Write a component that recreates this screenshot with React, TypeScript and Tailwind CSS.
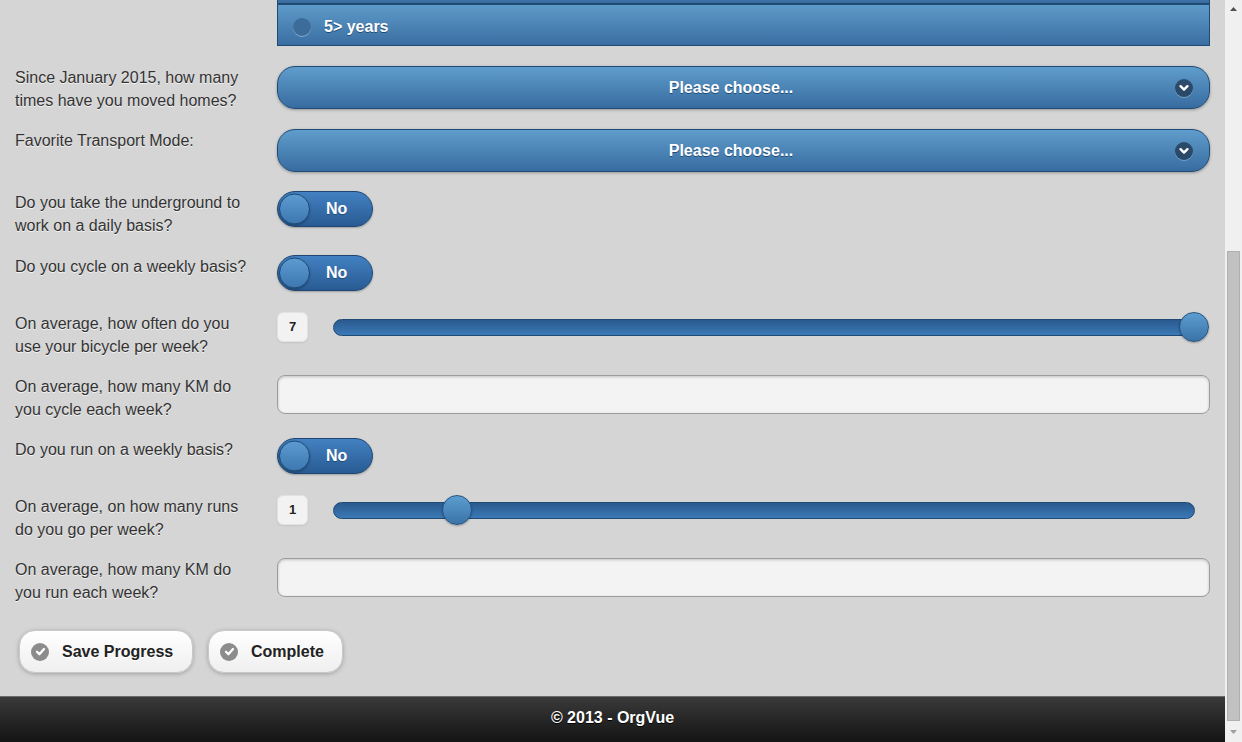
import React from "react";

const labelCls =
  "w-[262px] shrink-0 pr-3 text-[16px] leading-[23px] text-[#333] [text-shadow:0_1px_0_#f3f3f3]";

function Chevron() {
  return (
    <span className="absolute right-[16px] top-1/2 -translate-y-1/2 w-[18px] h-[18px] rounded-full bg-[#263f5c]/85 flex items-center justify-center shadow-[0_1px_0_rgba(255,255,255,0.3)]">
      <svg width="10" height="10" viewBox="0 0 10 10">
        <path d="M1.6 3.2 L5 6.6 L8.4 3.2" fill="none" stroke="#fff" strokeWidth="2.4" strokeLinecap="round" strokeLinejoin="round" />
      </svg>
    </span>
  );
}

function Select() {
  return (
    <div className="relative flex-1 h-[43px] rounded-[18px] border border-[#1d4a76] bg-gradient-to-b from-[#5f9dcc] to-[#386ca0] shadow-[0_1px_3px_rgba(0,0,0,0.3)] flex items-center justify-center pr-[25px]">
      <span className="text-white font-bold text-[16px] [text-shadow:0_1px_0_#1f4b75]">Please choose...</span>
      <Chevron />
    </div>
  );
}

function Toggle() {
  return (
    <div className="relative w-[96px] h-[36px] rounded-full border border-[#1e4670] bg-gradient-to-b from-[#4381c2] to-[#285b93] shadow-[0_1px_2px_rgba(0,0,0,0.25)] flex items-center">
      <span className="absolute left-[1px] top-1/2 -translate-y-1/2 w-[31px] h-[31px] rounded-full border border-[#1f4a74] bg-gradient-to-b from-[#5c9bd1] to-[#3d78b0] shadow-[0_1px_2px_rgba(0,0,0,0.3)]" />
      <span className="absolute left-[48px] text-white font-bold text-[16px] [text-shadow:0_1px_0_#1f4b75]">No</span>
    </div>
  );
}

function Slider({ value, max }: { value: number; max: number }) {
  const pct = (value / max) * 100;
  return (
    <div className="flex-1 flex items-center h-[30px]">
      <div className="w-[31px] h-[30px] shrink-0 rounded-[6px] bg-[#f2f2f2] border border-[#e2e2e2] shadow-[0_1px_2px_rgba(0,0,0,0.08)] flex items-center justify-center text-[13px] font-bold text-[#222]">
        {value}
      </div>
      <div className="ml-[25px] mr-[15px] flex-1 relative h-[17px] rounded-full border border-[#1f4a73] bg-gradient-to-b from-[#2a5a8e] to-[#3b79b6]">
        <span
          className="absolute top-1/2 -translate-x-1/2 -translate-y-1/2 w-[30px] h-[30px] rounded-full border border-[#245380] bg-gradient-to-b from-[#5d9dd0] to-[#3a73a8] shadow-[0_1px_2px_rgba(0,0,0,0.3)]"
          style={{ left: `${pct}%` }}
        />
      </div>
    </div>
  );
}

function Input() {
  return (
    <div className="flex-1 h-[39px] rounded-[8px] border border-[#9c9c9c] bg-[#f3f3f3] shadow-[inset_0_1px_3px_rgba(0,0,0,0.2)]" />
  );
}

function Check() {
  return (
    <span className="w-[18px] h-[18px] rounded-full bg-[#8c8c8c] flex items-center justify-center">
      <svg width="11" height="11" viewBox="0 0 11 11">
        <path d="M2 5.8 L4.4 8.2 L9 3" fill="none" stroke="#fff" strokeWidth="2.3" strokeLinecap="round" strokeLinejoin="round" />
      </svg>
    </span>
  );
}

function Button({ text, w }: { text: string; w: string }) {
  return (
    <div className={`${w} h-[43px] rounded-[16px] border border-[#c8c8c8] bg-gradient-to-b from-[#ffffff] to-[#efefef] shadow-[0_1px_4px_rgba(0,0,0,0.25)] flex items-center pl-[11px]`}>
      <Check />
      <span className="ml-[13px] font-bold text-[16px] text-[#222] [text-shadow:0_1px_0_#fff]">{text}</span>
    </div>
  );
}

function Row({ label, children, mt }: { label: React.ReactNode; children: React.ReactNode; mt: string }) {
  return (
    <div className={`flex items-start ${mt}`}>
      <div className={labelCls}>{label}</div>
      {children}
    </div>
  );
}

export default function App() {
  return (
    <div className="w-[1242px] h-[742px] flex overflow-hidden bg-[#d5d5d5]" style={{ fontFamily: '"Liberation Sans", Arial, sans-serif' }}>
      <div className="w-[1225px] h-full flex flex-col">
        <div className="flex-1 pl-[15px] pr-[15px]">
          {/* top radio list remnant */}
          <div className="flex">
            <div className="w-[262px] shrink-0" />
            <div className="flex-1 h-[46px] border-x border-b border-[#1f4a73] flex flex-col">
              <div className="h-[3px] bg-gradient-to-b from-[#3e72a6] to-[#386b9e]" />
              <div className="flex-1 border-t-2 border-[#1f4a73] bg-gradient-to-b from-[#5e9bc9] to-[#3a6ea2] flex items-center pt-[3px]">
                <span className="ml-[15px] w-[18px] h-[18px] rounded-full bg-[#3c6c9a] shadow-[0_1px_0_rgba(255,255,255,0.35)]" />
                <span className="ml-[13px] text-white font-bold text-[16px] [text-shadow:0_1px_0_#1f4b75]">5&gt; years</span>
              </div>
            </div>
          </div>

          <Row mt="mt-[20px]" label={<>Since January 2015, how many<br />times have you moved homes?</>}>
            <Select />
          </Row>
          <Row mt="mt-[17px]" label="Favorite Transport Mode:">
            <Select />
          </Row>
          <Row mt="mt-[19px]" label={<>Do you take the underground to<br />work on a daily basis?</>}>
            <Toggle />
          </Row>
          <Row mt="mt-[18px]" label="Do you cycle on a weekly basis?">
            <Toggle />
          </Row>
          <Row mt="mt-[21px]" label={<>On average, how often do you<br />use your bicycle per week?</>}>
            <div className="flex-1 flex"><Slider value={7} max={7} /></div>
          </Row>
          <Row mt="mt-[17px]" label={<>On average, how many KM do<br />you cycle each week?</>}>
            <Input />
          </Row>
          <Row mt="mt-[17px]" label="Do you run on a weekly basis?">
            <Toggle />
          </Row>
          <Row mt="mt-[21px]" label={<>On average, on how many runs<br />do you go per week?</>}>
            <div className="flex-1 flex"><Slider value={1} max={7} /></div>
          </Row>
          <Row mt="mt-[17px]" label={<>On average, how many KM do<br />you run each week?</>}>
            <Input />
          </Row>

          <div className="flex mt-[26px] ml-[4px] gap-[15px]">
            <Button text="Save Progress" w="w-[174px]" />
            <Button text="Complete" w="w-[135px]" />
          </div>
        </div>
        <div className="h-[46px] shrink-0 border-t border-[#6a6a6a] bg-gradient-to-b from-[#3a3a3a] to-[#141414] flex items-center justify-center pb-[4px]">
          <span className="text-white font-bold text-[16px] [text-shadow:0_1px_0_#000]">© 2013 - OrgVue</span>
        </div>
      </div>
      <div className="w-[17px] h-full bg-[#f0f0f0] flex flex-col items-center">
        <div className="h-[17px] flex items-center justify-center">
          <svg width="7" height="4" viewBox="0 0 7 4"><path d="M0 4 L3.5 0 L7 4 Z" fill="#505050" /></svg>
        </div>
        <div className="mt-[234px] w-[13px] h-[470px] bg-[#c1c1c1] border border-[#b0b0b0]" />
        <div className="flex-1 flex items-center justify-center">
          <svg width="7" height="4" viewBox="0 0 7 4"><path d="M0 0 L7 0 L3.5 4 Z" fill="#a0a0a0" /></svg>
        </div>
      </div>
    </div>
  );
}
